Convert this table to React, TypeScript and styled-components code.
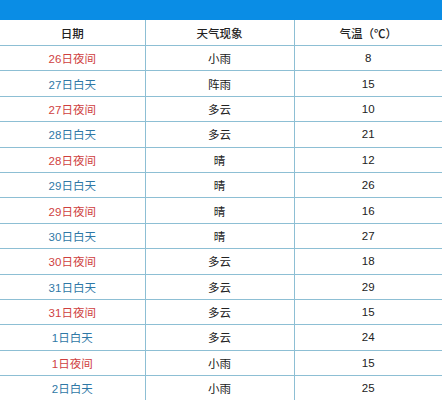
import styled, { createGlobalStyle } from "styled-components";

const GlobalStyle = createGlobalStyle`
  body {
    margin: 0;
    background: #ffffff;
    font-family: "Liberation Sans", "Noto Sans CJK SC", sans-serif;
  }
`;

const TopBar = styled.div`
  height: 20px;
  background: #0a8de5;
`;

const Table = styled.table`
  width: 442px;
  border-collapse: collapse;
  table-layout: fixed;
`;

const HeadCell = styled.th`
  height: 25px;
  padding: 0;
  font-size: 11.5px;
  font-weight: 500;
  color: #222222;
  text-align: center;
  border-bottom: 1px solid #8dbfd4;
  & + & {
    border-left: 1px solid #8dbfd4;
  }
`;

const Cell = styled.td<{ $tone?: "night" | "day" }>`
  height: 24.4px;
  padding: 0;
  font-size: 11.5px;
  text-align: center;
  color: ${(p) => (p.$tone === "night" ? "#cf3f3f" : p.$tone === "day" ? "#2f78a6" : "#222222")};
  border-bottom: 1px solid #8dbfd4;
  & + & {
    border-left: 1px solid #8dbfd4;
  }
`;

const rows = [
  ["26日夜间", "小雨", "8"],
  ["27日白天", "阵雨", "15"],
  ["27日夜间", "多云", "10"],
  ["28日白天", "多云", "21"],
  ["28日夜间", "晴", "12"],
  ["29日白天", "晴", "26"],
  ["29日夜间", "晴", "16"],
  ["30日白天", "晴", "27"],
  ["30日夜间", "多云", "18"],
  ["31日白天", "多云", "29"],
  ["31日夜间", "多云", "15"],
  ["1日白天", "多云", "24"],
  ["1日夜间", "小雨", "15"],
  ["2日白天", "小雨", "25"],
];

export default function App() {
  return (
    <>
      <GlobalStyle />
      <TopBar />
      <Table>
        <colgroup>
          <col style={{ width: 145 }} />
          <col style={{ width: 149 }} />
          <col style={{ width: 148 }} />
        </colgroup>
        <thead>
          <tr>
            <HeadCell>日期</HeadCell>
            <HeadCell>天气现象</HeadCell>
            <HeadCell>气温（℃）</HeadCell>
          </tr>
        </thead>
        <tbody>
          {rows.map(([date, weather, temp]) => (
            <tr key={date}>
              <Cell $tone={date.includes("夜") ? "night" : "day"}>{date}</Cell>
              <Cell>{weather}</Cell>
              <Cell>{temp}</Cell>
            </tr>
          ))}
        </tbody>
      </Table>
    </>
  );
}
